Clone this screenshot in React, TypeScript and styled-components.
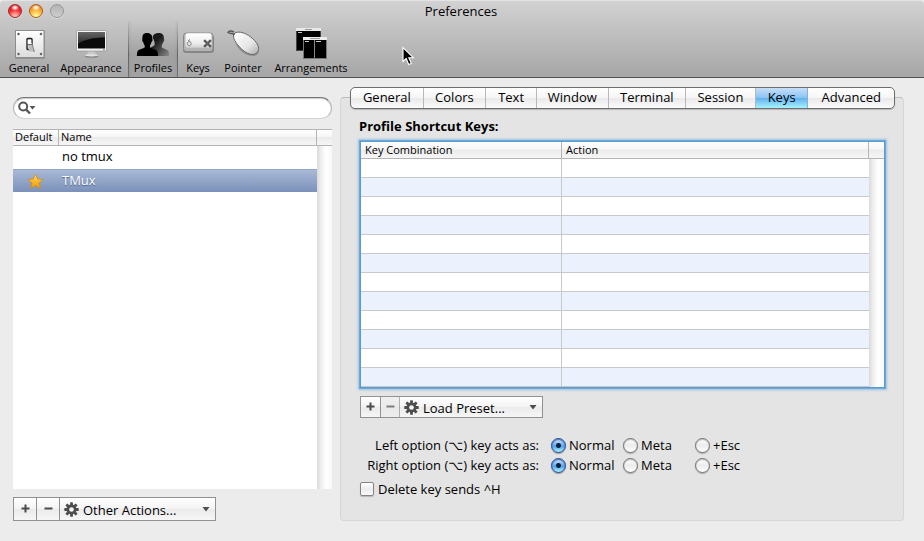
import React, { useState } from "react";
import styled, { createGlobalStyle, css } from "styled-components";

const GlobalStyle = createGlobalStyle`
  *, *::before, *::after { box-sizing: border-box; }
  body { margin: 0; background: #ececec; }
  body, button, input, select {
    font-family: "Lucida Grande", "Open Sans", "Noto Sans", "DejaVu Sans", sans-serif;
    font-size: 13px;
    line-height: 18px;
    color: #000;
  }
`;

const Window = styled.div`
  display: flex;
  flex-direction: column;
  min-height: 100vh;
  background: #ececec;
  border-radius: 4px 4px 0 0;
`;

const Header = styled.header`
  position: relative;
  background: linear-gradient(#d2d2d2, #a6a6a6);
  border-top: 1px solid #e4e4e4;
  border-bottom: 1px solid #515151;
  border-radius: 4px 4px 0 0;
`;

const TitleBar = styled.div`
  display: grid;
  grid-template-columns: 72px 1fr 74px;
  align-items: center;
  height: 20px;
`;

const Lights = styled.div`
  display: flex;
  gap: 7px;
  padding-left: 8px;
`;

const Light = styled.button<{ $tone: "red" | "orange" | "gray" }>`
  width: 14px;
  height: 14px;
  padding: 0;
  border-radius: 50%;
  box-shadow: 0 1px 0 rgba(255, 255, 255, 0.35);
  ${({ $tone }) =>
    $tone === "red"
      ? css`
          border: 1px solid #a02a2a;
          background: radial-gradient(ellipse 4px 3px at 50% 22%, #ffe4e4 30%, transparent),
            radial-gradient(circle at 50% 95%, #ffb5b0 10%, #f5282c 55%, #c8141c);
        `
      : $tone === "orange"
        ? css`
            border: 1px solid #a8601c;
            background: radial-gradient(ellipse 4px 3px at 50% 22%, #fff2dc 30%, transparent),
              radial-gradient(circle at 50% 95%, #fff58f 10%, #fba22c 60%, #d96b13);
          `
        : css`
            border: 1px solid #969696;
            background: linear-gradient(#b4b4b4, #cecece);
          `}
`;

const Title = styled.h1`
  margin: 0;
  font-size: 13px;
  font-weight: 400;
  line-height: 18px;
  text-align: center;
`;

const Toolbar = styled.nav`
  display: grid;
  grid-template-columns: 50px 74px 50px 40px 50px 86px;
  padding-left: 4px;
  height: 56px;
`;

const Tool = styled.button<{ $selected?: boolean }>`
  display: flex;
  flex-direction: column;
  align-items: center;
  justify-content: flex-end;
  padding: 0 0 1px;
  border: 0;
  background: none;
  font-size: 11px;
  line-height: 16px;
  white-space: nowrap;
  ${({ $selected }) =>
    $selected &&
    css`
      background: linear-gradient(transparent, rgba(0, 0, 0, 0.35) 60%, rgba(0, 0, 0, 0.25)) left / 1px 100% no-repeat,
        linear-gradient(transparent, rgba(0, 0, 0, 0.35) 60%, rgba(0, 0, 0, 0.25)) right / 1px 100% no-repeat,
        linear-gradient(90deg, rgba(0, 0, 0, 0.06), transparent 4px calc(100% - 4px), rgba(0, 0, 0, 0.06)),
        linear-gradient(transparent, rgba(0, 0, 0, 0.1) 60%, rgba(0, 0, 0, 0.03));
    `}
  svg { display: block; }
`;

const Pointer = styled.svg`
  position: absolute;
  left: 402px;
  top: 45px;
`;

const Main = styled.main`
  display: grid;
  grid-template-columns: 319px minmax(0, 1fr);
  column-gap: 8px;
  flex: 1;
  padding: 9px 20px 20px 13px;
`;

const Sidebar = styled.section`
  display: flex;
  flex-direction: column;
  padding-top: 10px;
`;

const Search = styled.label`
  display: flex;
  align-items: center;
  height: 22px;
  padding: 0 10px 0 4px;
  background: #fff;
  border: 1px solid #b5b5b5;
  border-top-color: #777;
  border-bottom-color: #d2d2d2;
  border-radius: 11px;
  box-shadow: inset 0 1px 1px #ccc;
  input {
    flex: 1;
    min-width: 0;
    border: 0;
    outline: 0;
    background: none;
  }
`;

const scroller = css`
  background: linear-gradient(90deg, #dadada, #f1f1f1 30%, #fff 60%, #f8f8f8);
`;

const ProfileList = styled.div`
  display: flex;
  flex-direction: column;
  flex: 1;
  margin-top: 10px;
  background: #fff;
`;

const Table = styled.table`
  width: 100%;
  table-layout: fixed;
  border-spacing: 0;
  text-align: left;
  th {
    height: 17px;
    padding: 0 0 0 4px;
    border-right: 1px solid #b4b4b4;
    border-bottom: 1px solid #b4b4b4;
    background: linear-gradient(#fff, #f6f6f6 45%, #ebebeb 50%, #f6f6f6);
    font-size: 11px;
    line-height: 14px;
    font-weight: 400;
  }
  th:last-child { border-right: 0; }
`;

const ProfileTable = styled(Table)`
  th { border-top: 1px solid #b4b4b4; padding: 0 0 1px 2px; }
  td { height: 23px; padding: 0 3px 3px; }
  td svg { display: block; margin: 3px 0 0 11px; }
`;

const ProfileRow = styled.tr<{ $selected?: boolean }>`
  ${({ $selected }) =>
    $selected &&
    css`
      color: #fff;
      text-shadow: 0 1px 1px #4c5f86;
      td { padding-bottom: 2px; }
      td:not(:last-child) {
        background: linear-gradient(#a9b9d7, #7b91b9);
        border-top: 1px solid #94a7ca;
      }
    `}
  td:last-child { ${scroller} }
`;

const ListRest = styled.div`
  flex: 1;
  display: grid;
  grid-template-columns: 1fr 15px;
  &::after { content: ""; ${scroller} }
  &::before { content: ""; }
`;

const ButtonBar = styled.div<{ $tall?: boolean }>`
  display: grid;
  grid-template-columns: ${({ $tall }) => ($tall ? "23px 23px 156px" : "20px 19px 143px")};
  height: ${({ $tall }) => ($tall ? 24 : 22)}px;
  width: max-content;
  margin-top: 8px;
  border: 1px solid #919191;
  border-right: 0;
  background: linear-gradient(#fff, #f3f3f3 50%, #ebebeb 52%, #f6f6f6);
`;

const SmallButton = styled.button`
  display: grid;
  place-items: center;
  padding: 0 0 2px;
  border: 0;
  border-right: 1px solid #919191;
  background: none;
  &:disabled { background: #e9e9e9; opacity: 0.7; }
`;

const Menu = styled.label`
  display: grid;
  grid-template-columns: 23px 1fr 13px;
  align-items: center;
  border-right: 1px solid #919191;
  svg { grid-row: 1; pointer-events: none; z-index: 1; }
  svg:first-child { grid-column: 1; justify-self: center; }
  svg:last-child { grid-column: 3; }
  select {
    grid-area: 1 / 1 / 2 / 4;
    width: 100%;
    height: 20px;
    padding: 1px 0 0 23px;
    border: 0;
    appearance: none;
    background: none;
  }
`;

const Panel = styled.section`
  display: flex;
  flex-direction: column;
  margin-top: 10px;
  padding: 0 18px 10px;
  border: 1px solid #d6d6d6;
  border-top-color: #bebebe;
  border-radius: 4px;
  background: #e4e4e4;
`;

const Tabs = styled.div`
  display: grid;
  grid-template-columns: 73fr 63fr 51fr 72fr 78fr 70fr 53fr 86fr;
  height: 22px;
  margin: -11px -10px 0 -9px;
  border: 1px solid #6d6d6d;
  border-radius: 5px;
  overflow: hidden;
  background: linear-gradient(#fff, #f6f6f6 48%, #eaeaea 52%, #fafafa);
  box-shadow: 0 1px 1px rgba(0, 0, 0, 0.2);
`;

const Tab = styled.button<{ $selected?: boolean }>`
  padding: 0 0 2px;
  border: 0;
  border-right: 1px solid #b9b9b9;
  background: none;
  white-space: nowrap;
  &:last-child { border-right: 0; }
  ${({ $selected }) =>
    $selected &&
    css`
      background: linear-gradient(#c6dff7, #8cc4f3 48%, #62b2ee 52%, #a8f3ff);
      border-color: #7cb4df;
    `}
`;

const Heading = styled.h2`
  margin: 8px 0 0;
  font-size: 13px;
  line-height: 18px;
  font-weight: 700;
`;

const KeyTableFrame = styled.div`
  margin: 6px 0 0 1px;
  border: 1px solid #5a9bd0;
  box-shadow: 0 0 0 1px #6ea9dc, 0 0 2px 2px #9cc3e4;
`;

const KeyTable = styled(Table)`
  background: #fff;
  td {
    height: 19px;
    padding: 0 4px;
    border-right: 1px solid #c8c8c8;
    border-bottom: 1px solid #c8c8c8;
  }
  td:nth-child(2) { border-right: 0; }
  td:last-child { border: 0; ${scroller} }
  tbody tr:nth-child(even) td:not(:last-child) { background: #ebf1fd; }
`;

const KeyButtons = styled(ButtonBar)`
  margin-left: 1px;
`;

const Options = styled.div`
  margin-top: 17px;
`;

const OptionRow = styled.fieldset`
  display: grid;
  grid-template-columns: 180px 72px 72px max-content;
  align-items: center;
  height: 20px;
  margin: 0;
  padding: 0;
  border: 0;
  white-space: nowrap;
`;

const OptionName = styled.span`
  text-align: right;
`;

const OptionGlyph = styled.span`
  font-family: "DejaVu Sans", sans-serif;
  font-size: 13px;
  line-height: 16px;
`;

const Choice = styled.label`
  display: flex;
  align-items: center;
  gap: 3px;
  padding-left: 12px;
  width: max-content;
  white-space: nowrap;
`;

const Radio = styled.input`
  appearance: none;
  width: 15px;
  height: 15px;
  margin: 0;
  border: 1px solid #6f6f6f;
  border-radius: 50%;
  background: linear-gradient(#fff, #ececec 50%, #fff);
  box-shadow: 0 1px 1px rgba(0, 0, 0, 0.25), inset 0 1px 1px #bbb;
  &:checked {
    border-color: #1f4596;
    background: radial-gradient(circle at 50% 50%, #10213f 2px, transparent 3px),
      linear-gradient(#dcedfc, #6db1ee 45%, #4fa3ec 55%, #aef2ff);
    box-shadow: 0 1px 1px rgba(0, 0, 0, 0.35), inset 0 1px 1px #3c68b8;
  }
`;

const CheckLabel = styled.label`
  display: flex;
  align-items: center;
  gap: 4px;
  width: max-content;
  margin: 5px 0 0 1px;
`;

const Check = styled.input`
  appearance: none;
  width: 14px;
  height: 14px;
  margin: 0;
  border: 1px solid #858585;
  border-radius: 2px;
  background: linear-gradient(#fff, #ececec 50%, #fafafa);
  box-shadow: 0 1px 1px rgba(0, 0, 0, 0.2);
  &:checked { background: #6db1ee; }
`;

const SwitchIcon = () => (
  <svg width="32" height="34" viewBox="0 0 32 34">
    <defs>
      <linearGradient id="plate" x2="0" y2="1">
        <stop stopColor="#fff" />
        <stop offset="1" stopColor="#dcdcdc" />
      </linearGradient>
    </defs>
    <rect x="2" y="5" width="30" height="28" fill="#777" opacity=".5" />
    <rect x="2.500" y="4.500" width="28.500" height="27" fill="url(#plate)" stroke="#8c8c8c" />
    {[[5.500, 8], [28, 8], [5.500, 28], [28, 28]].map(([x, y]) => (
      <g key={`${x}-${y}`}>
        <circle cx={x} cy={y} r="1.500" fill="#bbb" />
        <circle cx={x} cy={y} r=".9" fill="#444" />
      </g>
    ))}
    <rect x="14" y="12.500" width="5" height="11" rx=".8" fill="#e4e4e4" stroke="#222" strokeWidth="1.400" />
    <path d="M15 17h4l1.500 8.500H16z" fill="#bdbdbd" />
    <path d="M14.800 14h3.400v4h-3.400z" fill="#fff" />
    <path d="M14.500 18.500h4.500" stroke="#555" strokeWidth=".8" />
    <path d="M19.500 18l2.300 7.500-1.300.5z" fill="#777" />
  </svg>
);

const DisplayIcon = () => (
  <svg width="34" height="34" viewBox="0 0 34 34">
    <defs>
      <linearGradient id="screen" x2="0" y2="1">
        <stop stopColor="#666" />
        <stop offset="1" stopColor="#2b2b2b" />
      </linearGradient>
    </defs>
    <ellipse cx="17.500" cy="30.500" rx="7" ry="1.300" fill="#888" />
    <path d="M14 25h7l.7 4h-8.400z" fill="#c9c9c9" />
    <ellipse cx="17.500" cy="29.300" rx="6.500" ry="1.100" fill="#e2e2e2" />
    <rect x="2.500" y="4.500" width="30" height="20.500" rx="1" fill="#f4f4f4" stroke="#999" strokeWidth=".8" />
    <rect x="4" y="6" width="27" height="16.500" fill="#0c0c0c" />
    <path d="M4 6h27v5.500C20 11.500 10 13.500 4 18z" fill="url(#screen)" />
    <circle cx="30" cy="23.700" r=".7" fill="#555" />
  </svg>
);

const PeopleIcon = () => (
  <svg width="34" height="34" viewBox="0 0 34 34">
    <defs>
      <linearGradient id="back" x1="0" x2="1" y1="0" y2="1">
        <stop offset=".35" stopColor="#1a1a1a" />
        <stop offset="1" stopColor="#8a8a8a" />
      </linearGradient>
    </defs>
    <g transform="translate(0 1)">
      <path
        d="M23 6c3.600 0 5.200 2.400 5 6 .7 1 .1 2.500-.8 3-.4 1.600-1 2.500-1.400 3.200v2.200c2 1.600 5.600 1.800 6.500 3.600.6 1.300.7 3 .7 5H14v-8l4.600-2.800v-3.300c-.5-.8-.8-1.600-1-2.700-.8-.7-1.200-1.800-.6-3C16.800 8 19 6 23 6z"
        fill="url(#back)"
      />
      <path
        d="M11 6c3.900 0 5.600 2.400 5.300 6 .7 1 .1 2.500-.8 3-.4 1.600-1 2.500-1.500 3.200v2.200c2.200 1.600 6.100 1.800 7.100 3.600.7 1.300.9 3 .9 5H.900c0-2 .2-3.700.8-5 1-1.800 4.800-2 7-3.600v-2.200c-.6-.7-1.200-1.600-1.500-3.200-.9-.7-1.400-2-.8-3C6.100 8 7.500 6 11 6z"
        fill="#000"
      />
    </g>
  </svg>
);

const KeycapIcon = () => (
  <svg width="32" height="34" viewBox="0 0 32 34">
    <defs>
      <linearGradient id="cap" x2="0" y2="1">
        <stop stopColor="#fff" />
        <stop offset=".7" stopColor="#ececec" />
        <stop offset="1" stopColor="#d0d0d0" />
      </linearGradient>
    </defs>
    <rect x="1" y="9" width="31" height="18" rx="3" fill="#7b7b7b" opacity=".8" />
    <rect x="1.500" y="7" width="29.500" height="18.500" rx="3" fill="#b4b4b4" stroke="#808080" strokeWidth=".8" />
    <rect x="3.500" y="7.300" width="26" height="14.500" rx="2" fill="url(#cap)" />
    <path d="M6 15l2-1.500M5.500 16.500c1-1 3-1 3.500 0 .6 1.200-.3 3.300-1.700 3.300s-2.500-2-1.800-3.300z" fill="none" stroke="#777" />
    <path
      d="M24 16h3v3h-3zM24 16h-1a1 1 0 1 1 1-1zm3 0v-1a1 1 0 1 1 1 1zm0 3h1a1 1 0 1 1-1 1zm-3 0v1a1 1 0 1 1-1-1z"
      fill="#777"
      stroke="#444"
      strokeWidth=".9"
    />
  </svg>
);

const MouseIcon = () => (
  <svg width="34" height="34" viewBox="0 0 34 34">
    <defs>
      <linearGradient id="mouse" x1="0" x2="1" y1="0" y2="1">
        <stop stopColor="#fff" />
        <stop offset=".6" stopColor="#e6e6e6" />
        <stop offset="1" stopColor="#aaa" />
      </linearGradient>
    </defs>
    <path d="M9 15c2 9 11 15 18 15 5 0 7-4 5-9z" fill="#777" opacity=".6" />
    <path
      d="M7.500 10c0-3.500 4-4.500 8.500-3.500 6 1.500 12.500 7 15.300 11.500 2.200 4 1.700 7.600-1.200 9.500-3.500 2.300-9.500.3-13.900-4C11.800 19.200 7.500 14 7.500 10z"
      fill="url(#mouse)"
      stroke="#666"
    />
    <path d="M9 12c2 5 5 8.500 8 11" fill="none" stroke="#fff" />
    <path d="M8.500 9C7 6.500 4.500 8.500 2 6.500c1-2 4-1.500 6-.5" fill="none" stroke="#555" strokeWidth="1.400" />
  </svg>
);

const WindowsIcon = () => (
  <svg width="34" height="34" viewBox="0 0 34 34">
    <rect x="2" y="2" width="25" height="23" fill="#444" />
    <rect x="2" y="2" width="25" height="3" fill="#e9e9e9" />
    <path d="M11 3.500h7" stroke="#999" />
    <rect x="3" y="5" width="23" height="19" fill="#000" />
    <path d="M4 6.500h4" stroke="#ccc" />
    <rect x="9" y="11" width="24" height="22" fill="#777" />
    <rect x="9" y="11" width="24" height="3" fill="#eee" />
    <path d="M16 12.500h10" stroke="#999" />
    <rect x="10" y="14" width="22" height="18" fill="#000" />
    <path d="M20.500 14v18" stroke="#888" />
    <path d="M11 15.500h4M22 15.500h5" stroke="#ccc" />
  </svg>
);

const Gear = () => (
  <svg width="15" height="15" viewBox="0 0 16 16">
    <g fill="#4d4d4d">
      {[0, 45, 90, 135].map((a) => (
        <rect key={a} x="6.500" y=".3" width="3" height="15.400" rx=".5" transform={`rotate(${a} 8 8)`} />
      ))}
      <circle cx="8" cy="8" r="5.300" />
    </g>
    <circle cx="8" cy="8" r="2.500" fill="#f4f4f4" />
  </svg>
);

const DownArrow = () => (
  <svg width="8" height="5" viewBox="0 0 8 5">
    <path d="M.5 0h7L4 4.500z" fill="#4d4d4d" />
  </svg>
);

const Plus = () => (
  <svg width="9" height="9" viewBox="0 0 9 9">
    <path d="M.5 4.500h8M4.500.5v8" stroke="#4a4a4a" strokeWidth="2" />
  </svg>
);

const Minus = () => (
  <svg width="9" height="9" viewBox="0 0 9 9">
    <path d="M.5 4.500h8" stroke="#4a4a4a" strokeWidth="2" />
  </svg>
);

const Magnifier = () => (
  <svg width="18" height="14" viewBox="0 0 18 14">
    <circle cx="5.200" cy="5.500" r="4" fill="none" stroke="#555" strokeWidth="2" />
    <path d="M8 8.500l4 4" stroke="#555" strokeWidth="2.400" />
    <path d="M11.500 5h6l-3 3.500z" fill="#555" />
  </svg>
);

const Star = () => (
  <svg width="17" height="17" viewBox="0 0 17 17">
    <defs>
      <linearGradient id="gold" x2="0" y2="1">
        <stop stopColor="#ffe08a" />
        <stop offset=".5" stopColor="#fbb827" />
        <stop offset="1" stopColor="#ee9c10" />
      </linearGradient>
    </defs>
    <path
      d="M8.500 1l2.200 5 5.400.5-4.100 3.600 1.300 5.400-4.800-2.900-4.800 2.900L5 10.100.900 6.500 6.300 6z"
      fill="url(#gold)"
      stroke="#cf8a1c"
      strokeWidth=".8"
    />
  </svg>
);

const tools = [
  { name: "General", icon: <SwitchIcon /> },
  { name: "Appearance", icon: <DisplayIcon /> },
  { name: "Profiles", icon: <PeopleIcon /> },
  { name: "Keys", icon: <KeycapIcon /> },
  { name: "Pointer", icon: <MouseIcon /> },
  { name: "Arrangements", icon: <WindowsIcon /> },
];

const tabNames = ["General", "Colors", "Text", "Window", "Terminal", "Session", "Keys", "Advanced"];
const optionKeys = ["Left", "Right"];
const optionModes = ["Normal", "Meta", "+Esc"];

function ActionMenu({ text }: { text: string }) {
  return (
    <Menu>
      <Gear />
      <select aria-label={text}>
        <option>{text}</option>
      </select>
      <DownArrow />
    </Menu>
  );
}

export default function App() {
  const [tab, setTab] = useState("Keys");
  return (
    <Window>
      <GlobalStyle />
      <Header>
        <TitleBar>
          <Lights>
            <Light $tone="red" aria-label="Close" />
            <Light $tone="orange" aria-label="Minimize" />
            <Light $tone="gray" aria-label="Zoom" disabled />
          </Lights>
          <Title>Preferences</Title>
        </TitleBar>
        <Toolbar>
          {tools.map(({ name, icon }) => (
            <Tool key={name} $selected={name === "Profiles"}>
              {icon}
              {name}
            </Tool>
          ))}
        </Toolbar>
        <Pointer width="13" height="20" viewBox="0 0 13 20">
          <path
            d="M1 1.500v14l3.200-3 2.500 6 2.600-1.100-2.500-5.700h4.500z"
            fill="#000"
            stroke="#fff"
            strokeWidth="1.100"
          />
        </Pointer>
      </Header>
      <Main>
        <Sidebar>
          <Search>
            <Magnifier />
            <input type="text" aria-label="Search profiles" />
          </Search>
          <ProfileList>
            <ProfileTable>
              <colgroup>
                <col width="46" />
                <col />
                <col width="15" />
              </colgroup>
              <thead>
                <tr>
                  <th>Default</th>
                  <th>Name</th>
                  <th />
                </tr>
              </thead>
              <tbody>
                <ProfileRow>
                  <td />
                  <td>no tmux</td>
                  <td />
                </ProfileRow>
                <ProfileRow $selected>
                  <td>
                    <Star />
                  </td>
                  <td>TMux</td>
                  <td />
                </ProfileRow>
              </tbody>
            </ProfileTable>
            <ListRest />
          </ProfileList>
          <ButtonBar $tall>
            <SmallButton aria-label="Add profile">
              <Plus />
            </SmallButton>
            <SmallButton aria-label="Remove profile">
              <Minus />
            </SmallButton>
            <ActionMenu text="Other Actions..." />
          </ButtonBar>
        </Sidebar>
        <Panel>
          <Tabs role="tablist">
            {tabNames.map((name) => (
              <Tab
                key={name}
                role="tab"
                aria-selected={tab === name}
                $selected={tab === name}
                onClick={() => setTab(name)}
              >
                {name}
              </Tab>
            ))}
          </Tabs>
          <Heading>Profile Shortcut Keys:</Heading>
          <KeyTableFrame>
            <KeyTable>
              <colgroup>
                <col width="201" />
                <col />
                <col width="15" />
              </colgroup>
              <thead>
                <tr>
                  <th>Key Combination</th>
                  <th>Action</th>
                  <th />
                </tr>
              </thead>
              <tbody>
                {Array.from({ length: 12 }, (_, i) => (
                  <tr key={i}>
                    <td />
                    <td />
                    <td />
                  </tr>
                ))}
              </tbody>
            </KeyTable>
          </KeyTableFrame>
          <KeyButtons>
            <SmallButton aria-label="Add shortcut">
              <Plus />
            </SmallButton>
            <SmallButton aria-label="Remove shortcut" disabled>
              <Minus />
            </SmallButton>
            <ActionMenu text="Load Preset..." />
          </KeyButtons>
          <Options>
            {optionKeys.map((side) => (
              <OptionRow key={side} aria-label={`${side} option key`}>
                <OptionName>
                  {side} option (<OptionGlyph>⌥</OptionGlyph>) key acts as:
                </OptionName>
                {optionModes.map((mode) => (
                  <Choice key={mode}>
                    <Radio type="radio" name={side} defaultChecked={mode === "Normal"} />
                    {mode}
                  </Choice>
                ))}
              </OptionRow>
            ))}
            <CheckLabel>
              <Check type="checkbox" />
              Delete key sends ^H
            </CheckLabel>
          </Options>
        </Panel>
      </Main>
    </Window>
  );
}
